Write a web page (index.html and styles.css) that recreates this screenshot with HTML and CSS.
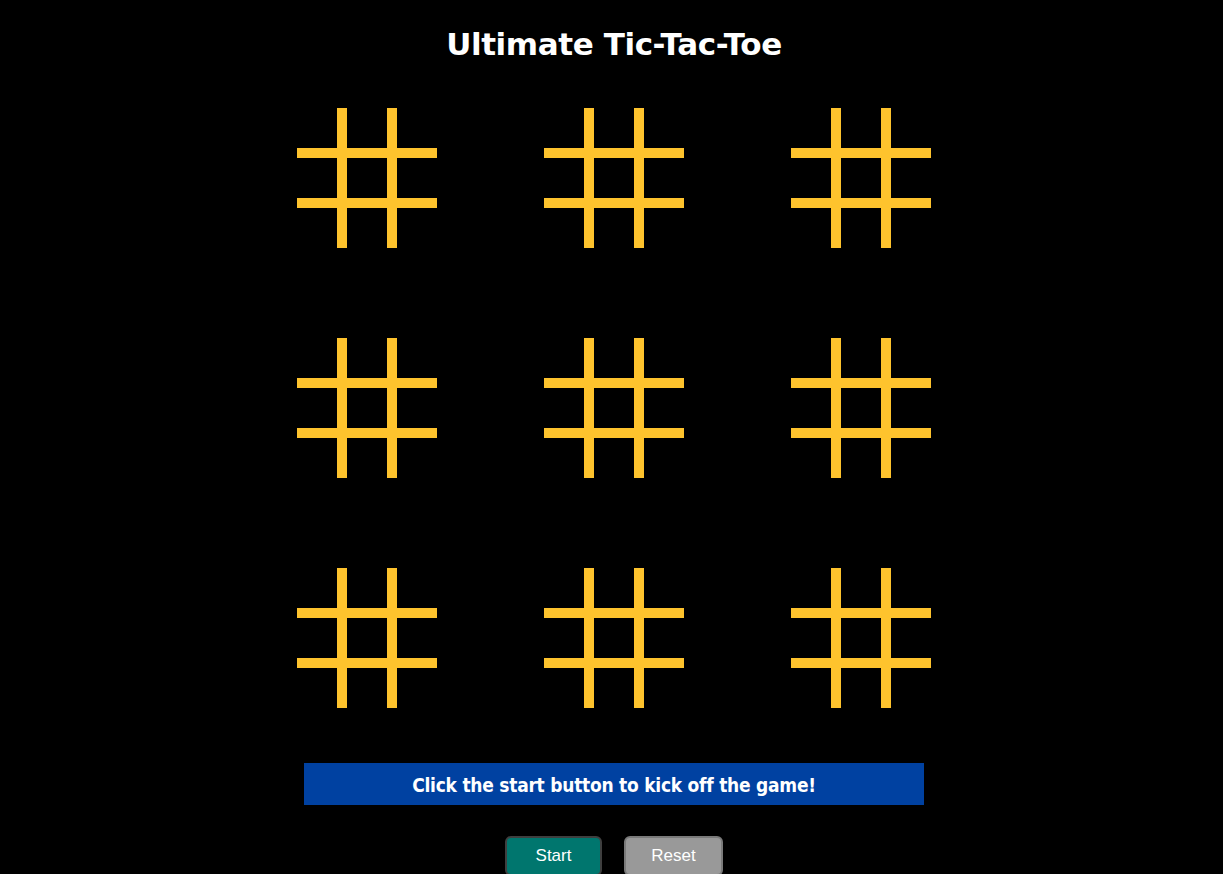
FILE: index.html
```html
<!DOCTYPE html>
<html lang="en">
<head>
<meta charset="utf-8">
<title>Ultimate Tic-Tac-Toe</title>
<link rel="stylesheet" href="styles.css">
</head>
<body>
<div class="page">
  <h1 class="title">Ultimate Tic-Tac-Toe</h1>
  <div class="boards">
    <div class="board"><div></div><div></div><div></div><div></div><div></div><div></div><div></div><div></div><div></div></div>
    <div class="board"><div></div><div></div><div></div><div></div><div></div><div></div><div></div><div></div><div></div></div>
    <div class="board"><div></div><div></div><div></div><div></div><div></div><div></div><div></div><div></div><div></div></div>
    <div class="board"><div></div><div></div><div></div><div></div><div></div><div></div><div></div><div></div><div></div></div>
    <div class="board"><div></div><div></div><div></div><div></div><div></div><div></div><div></div><div></div><div></div></div>
    <div class="board"><div></div><div></div><div></div><div></div><div></div><div></div><div></div><div></div><div></div></div>
    <div class="board"><div></div><div></div><div></div><div></div><div></div><div></div><div></div><div></div><div></div></div>
    <div class="board"><div></div><div></div><div></div><div></div><div></div><div></div><div></div><div></div><div></div></div>
    <div class="board"><div></div><div></div><div></div><div></div><div></div><div></div><div></div><div></div><div></div></div>
  </div>
  <div class="message">Click the start button to kick off the game!</div>
  <div class="controls">
    <button class="btn btn-start">Start</button>
    <button class="btn btn-reset">Reset</button>
  </div>
</div>
</body>
</html>
```
FILE: styles.css
```css
html, body {
  margin: 0;
  padding: 0;
  background: #000;
  height: 100%;
  overflow: hidden;
}
.page {
  display: flex;
  flex-direction: column;
  align-items: center;
  padding-left: 5px;
  font-family: "DejaVu Sans", sans-serif;
}
.title {
  margin: 22px 0 0;
  font-size: 31px;
  line-height: 44px;
  font-weight: bold;
  color: #fff;
  letter-spacing: -0.4px;
}
.boards {
  margin-top: 42px;
  display: grid;
  grid-template-columns: repeat(3, 140px);
  column-gap: 107px;
  row-gap: 90px;
}
.board {
  width: 140px;
  height: 140px;
  display: grid;
  grid-template-columns: repeat(3, 40px);
  grid-template-rows: repeat(3, 40px);
  gap: 10px;
  background: #fec32d;
}
.board > div {
  background: #000;
}
.message {
  margin-top: 55px;
  width: 620px;
  height: 42px;
  padding-top: 1px;
  box-sizing: border-box;
  background: #0041a1;
  color: #fff;
  font-weight: bold;
  font-size: 19px;
  letter-spacing: -0.25px;
  display: flex;
  align-items: center;
  justify-content: center;
  font-stretch: condensed;
}
.controls {
  margin-top: 31px;
  display: flex;
  gap: 22px;
}
.btn {
  height: 40px;
  padding: 0;
  border-radius: 6px;
  font-family: "Liberation Sans", Arial, sans-serif;
  font-size: 17px;
  color: #fff;
}
.btn-start {
  width: 97px;
  background: #00766e;
  border: 2px solid #3f3f3f;
}
.btn-reset {
  width: 99px;
  background: #999;
  border: 2px solid #7a7a7a;
}
```
